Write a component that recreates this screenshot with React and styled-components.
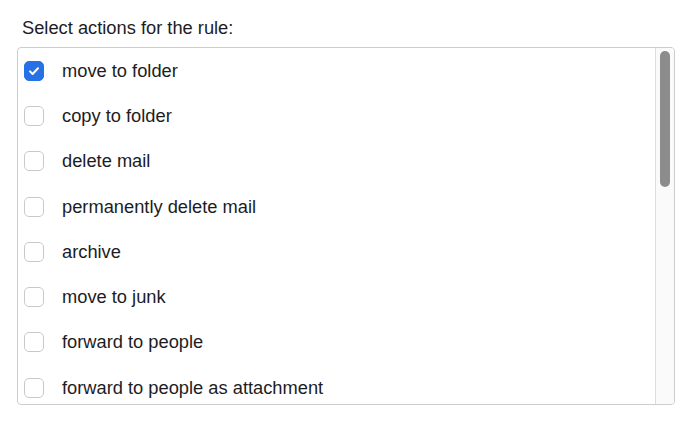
import React, { useState } from 'react';
import styled, { createGlobalStyle } from 'styled-components';

const GlobalStyle = createGlobalStyle`
  html, body {
    margin: 0;
    padding: 0;
    background: #ffffff;
    font-family: "Liberation Sans", Arial, Helvetica, sans-serif;
    color: #1d1d1f;
  }
`;

const Panel = styled.div`
  padding: 18px 16px 0 17px;
  width: 658px;
`;

const Heading = styled.div`
  font-size: 18.3px;
  line-height: 20px;
  padding-left: 5px;
  margin-bottom: 9px;
`;

const ListBox = styled.div`
  display: flex;
  height: 356px;
  border: 1px solid #cdcdcd;
  border-radius: 4px;
  overflow: hidden;
  background: #ffffff;
`;

const Rows = styled.div`
  flex: 1;
  display: flex;
  flex-direction: column;
  overflow: hidden;
`;

const Row = styled.label`
  flex: 0 0 45.3px;
  display: flex;
  align-items: center;
  gap: 18px;
  padding-left: 6px;
  font-size: 18.3px;
  cursor: pointer;
`;

const Box = styled.span`
  width: 20px;
  height: 20px;
  box-sizing: border-box;
  border-radius: 5px;
  display: flex;
  align-items: center;
  justify-content: center;
  flex-shrink: 0;
  background: ${p => (p.checked ? '#2671e6' : '#ffffff')};
  border: 1px solid ${p => (p.checked ? '#2671e6' : '#c9c9c9')};
`;

const ScrollTrack = styled.div`
  width: 19px;
  flex-shrink: 0;
  background: #fafafa;
  border-left: 1px solid #dcdcdc;
  display: flex;
  justify-content: center;
  padding-top: 3px;
  box-sizing: border-box;
`;

const Thumb = styled.div`
  width: 10px;
  height: 136px;
  border-radius: 5px;
  background: #8c8c8c;
`;

const actions = [
  'move to folder',
  'copy to folder',
  'delete mail',
  'permanently delete mail',
  'archive',
  'move to junk',
  'forward to people',
  'forward to people as attachment',
];

const Tick = () => (
  <svg width="14" height="14" viewBox="0 0 14 14" fill="none">
    <path d="M3 7.4l2.6 2.6L11 4.2" stroke="#fff" strokeWidth="2" strokeLinecap="round" strokeLinejoin="round" />
  </svg>
);

export default function App() {
  const [selected, setSelected] = useState(['move to folder']);

  const toggle = name =>
    setSelected(s => (s.includes(name) ? s.filter(x => x !== name) : [...s, name]));

  return (
    <>
      <GlobalStyle />
      <Panel>
        <Heading>Select actions for the rule:</Heading>
        <ListBox>
          <Rows>
            {actions.map(name => {
              const on = selected.includes(name);
              return (
                <Row key={name} onClick={() => toggle(name)}>
                  <Box checked={on}>{on && <Tick />}</Box>
                  {name}
                </Row>
              );
            })}
          </Rows>
          <ScrollTrack>
            <Thumb />
          </ScrollTrack>
        </ListBox>
      </Panel>
    </>
  );
}
